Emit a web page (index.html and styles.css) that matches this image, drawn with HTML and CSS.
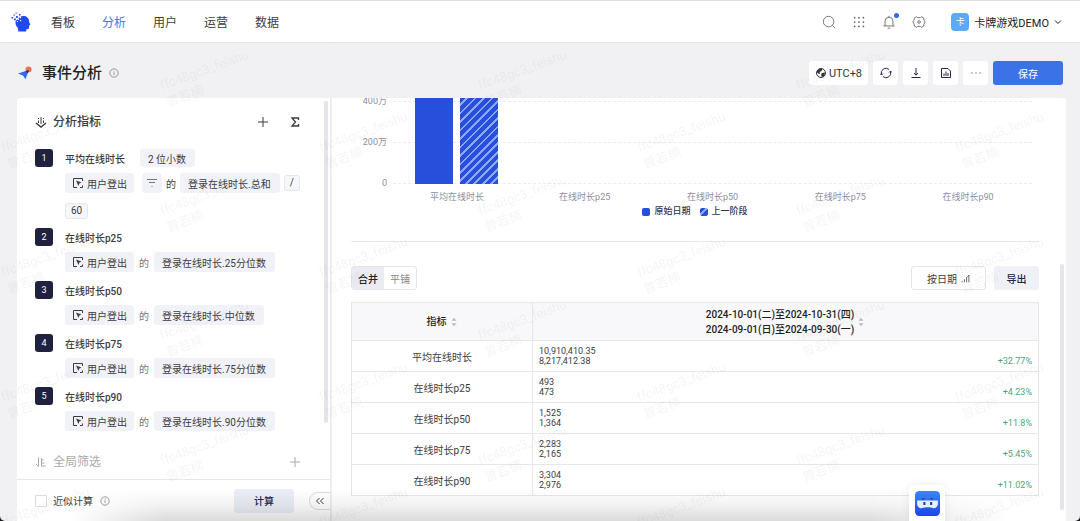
FILE: index.html
```html
<!DOCTYPE html>
<html lang="zh-CN">

<head>
    <meta charset="UTF-8">
    <meta name="viewport" content="width=device-width, initial-scale=1.0">
    <title>事件分析</title>
    <link rel="stylesheet" href="styles.css">
</head>

<body>
    <!-- shared icons -->
    <svg class="sprite" width="0" height="0">
        <symbol id="i-event" viewBox="0 0 12 12">
            <path d="M10.5 4V1.5h-9v9H5M10.5 10.5V8.500M8 10.500h2.500" fill="none" stroke="currentColor" />
            <path d="M4 3.500l5.500 2-2.200 1L6.500 9z" fill="currentColor" />
        </symbol>
        <symbol id="i-info" viewBox="0 0 12 12">
            <circle cx="6" cy="6" r="5" fill="none" stroke="currentColor" />
            <path d="M6 5.200v3.300M6 3.200v1" stroke="currentColor" />
        </symbol>
        <symbol id="i-plus" viewBox="0 0 12 12">
            <path d="M6 1v10M1 6h10" stroke="currentColor" fill="none" />
        </symbol>
        <symbol id="i-sort" viewBox="0 0 8 12">
            <path d="M4 1l3 3.500H1zM4 11l3-3.500H1z" fill="currentColor" />
        </symbol>
    </svg>

    <div class="app">
        <header class="topbar">
            <svg class="logo" viewBox="0 0 20 20">
                <path d="M6 8C8 4.500 12 3.200 15 4.500c2.500 1.300 3.300 3.500 3.200 5.500l1.200 3-1.300.5-.2 2.800c-.2.800-1 .9-2.400.8l-.3 2.400H7.300l-.4-3.500C4.800 14 4.200 11.500 4.600 9z" fill="#1f49f5" />
                <g fill="#1f49f5">
                    <rect x="0.500" y="5" width="1.500" height="1.500" />
                    <rect x="2.500" y="2.500" width="1.200" height="1.200" />
                    <rect x="3" y="6.500" width="1.800" height="1.800" />
                    <rect x="5" y="4" width="1.800" height="1.800" />
                    <rect x="4.500" y="0.500" width="1.200" height="1.200" />
                    <rect x="8" y="2" width="1.500" height="1.500" />
                </g>
                <g fill="#fff">
                    <rect x="6.500" y="6.500" width="1.500" height="1.500" />
                    <rect x="8.800" y="5" width="1.300" height="1.300" />
                    <rect x="6" y="9" width="1" height="1" />
                    <rect x="9" y="8" width="1.200" height="1.200" />
                </g>
            </svg>
            <nav class="nav">
                <a href="#">看板</a>
                <a href="#" class="active">分析</a>
                <a href="#">用户</a>
                <a href="#">运营</a>
                <a href="#">数据</a>
            </nav>
            <div class="tools">
                <button class="icon-btn" aria-label="搜索">
                    <svg viewBox="0 0 16 16"><circle cx="7.500" cy="7.500" r="6" /><path d="M12 12l3 3" /></svg>
                </button>
                <button class="icon-btn" aria-label="应用">
                    <svg viewBox="0 0 16 16" class="dots">
                        <path d="M3 3h.01M8 3h.01M13 3h.01M3 8h.01M8 8h.01M13 8h.01M3 13h.01M8 13h.01M13 13h.01" />
                    </svg>
                </button>
                <button class="icon-btn bell" aria-label="通知">
                    <svg viewBox="0 0 16 16"><path d="M1.500 12.500h13M3.500 12.500V7a4.500 4.500 0 0 1 9 0v5.500M8 2.500V1M6.500 15h3" /></svg>
                    <i class="dot"></i>
                </button>
                <button class="icon-btn" aria-label="设置">
                    <svg viewBox="0 0 16 16"><path d="M5 2l1.500 1h3L11 2l2.500 1.500v2L15 8l-1.500 2.500v2L11 14l-1.500-1h-3L5 14l-2.500-1.500v-2L1 8l1.500-2.500v-2z" /><circle cx="8" cy="8" r="1.500" /></svg>
                </button>
                <button class="project">
                    <span class="avatar">卡</span>
                    <span>卡牌游戏DEMO</span>
                    <svg viewBox="0 0 8 8"><path d="M1 2.500l3 3 3-3" /></svg>
                </button>
            </div>
        </header>

        <div class="page-head">
            <svg class="plane" viewBox="0 0 16 16">
                <circle cx="12" cy="4" r="3.500" fill="#f2704a" />
                <path d="M0 8.500l12.500-4L8.500 15l-2.500-4z" fill="#2f6bea" />
                <path d="M12.500 4.500L8.500 6l2.500 2.200z" fill="#26305e" />
            </svg>
            <h1>事件分析</h1>
            <svg class="info"><use href="#i-info" /></svg>
            <div class="actions">
                <button class="utc">
                    <svg viewBox="0 0 12 12"><circle cx="6" cy="6" r="4.500" fill="none" stroke="currentColor" /><path d="M2 4l3-2.500L7.500 2 6.500 4 4.500 5 5 6.500 4 7 2 5.500zM7 6l3-.5-.5 3L7 10 6 8z" fill="currentColor" /></svg>
                    UTC+8
                </button>
                <button aria-label="刷新">
                    <svg viewBox="0 0 12 12"><path d="M1.500 7.500A4.700 4.700 0 0 1 9 2.400M10.500 4.500A4.700 4.700 0 0 1 3 9.600" /><path d="M0 6.500l1.500 1.500L3 6.500M12 5.500L10.500 4 9 5.500" /></svg>
                </button>
                <button aria-label="下载">
                    <svg viewBox="0 0 12 12"><path d="M6 1v7M4 6l2 2.200L8 6M1.500 10.500h9" /></svg>
                </button>
                <button aria-label="报表">
                    <svg viewBox="0 0 12 12"><path d="M1.500 1.500h6.500l2.500 2.500v6.500h-9zM4 9V6.500M6 9V4.500M8 9V6" /></svg>
                </button>
                <button aria-label="更多">
                    <svg viewBox="0 0 12 12"><path d="M1.500 6h1M5.500 6h1M9.500 6h1" /></svg>
                </button>
                <button class="save">保存</button>
            </div>
        </div>

        <div class="workspace">
            <aside class="panel">
                <div class="panel-body">
                    <div class="section-title">
                        <svg viewBox="0 0 12 12"><path d="M1 7l5 4 5-4" stroke-width="1.500" /><path d="M6 1v7M3.500 2v1M3.500 4.500v2.500M8.500 2v1M8.500 4.500v2.500" /></svg>
                        <h2>分析指标</h2>
                        <button aria-label="添加指标"><svg><use href="#i-plus" /></svg></button>
                        <button aria-label="添加公式"><svg viewBox="0 0 12 12"><path d="M9.500 4V2H3l3.500 4L3 10h6.500V8" stroke-width="1.300" /></svg></button>
                    </div>

                    <ol class="metrics">
                        <li>
                            <span class="num">1</span>
                            <div class="name">平均在线时长 <button class="chip small">2 位小数</button></div>
                            <div class="formula first">
                                <button class="chip event"><svg><use href="#i-event" /></svg>用户登出</button>
                                <button class="chip filter" aria-label="筛选"><svg viewBox="0 0 12 12"><path d="M1 2.500h10M3 5.500h6M5.500 9.500h1" /></svg></button>
                                <span class="of">的</span>
                                <button class="chip">登录在线时长.总和</button>
                                <button class="token">/</button>
                                <button class="token">60</button>
                            </div>
                        </li>
                        <li>
                            <span class="num">2</span>
                            <div class="name">在线时长p25</div>
                            <div class="formula">
                                <button class="chip event"><svg><use href="#i-event" /></svg>用户登出</button>
                                <span class="of">的</span>
                                <button class="chip">登录在线时长.25分位数</button>
                            </div>
                        </li>
                        <li>
                            <span class="num">3</span>
                            <div class="name">在线时长p50</div>
                            <div class="formula">
                                <button class="chip event"><svg><use href="#i-event" /></svg>用户登出</button>
                                <span class="of">的</span>
                                <button class="chip">登录在线时长.中位数</button>
                            </div>
                        </li>
                        <li>
                            <span class="num">4</span>
                            <div class="name">在线时长p75</div>
                            <div class="formula">
                                <button class="chip event"><svg><use href="#i-event" /></svg>用户登出</button>
                                <span class="of">的</span>
                                <button class="chip">登录在线时长.75分位数</button>
                            </div>
                        </li>
                        <li>
                            <span class="num">5</span>
                            <div class="name">在线时长p90</div>
                            <div class="formula">
                                <button class="chip event"><svg><use href="#i-event" /></svg>用户登出</button>
                                <span class="of">的</span>
                                <button class="chip">登录在线时长.90分位数</button>
                            </div>
                        </li>
                    </ol>

                    <div class="section-title muted">
                        <svg viewBox="0 0 12 12"><path d="M3.500 1.500v9L1 8M6.500 2v8.500M6.500 4h2M6.500 7h3M6.500 10h4" /></svg>
                        <h2>全局筛选</h2>
                        <button aria-label="添加筛选"><svg><use href="#i-plus" /></svg></button>
                    </div>
                    <i class="scrollbar"></i>
                </div>
                <footer class="panel-foot">
                    <label><input type="checkbox">近似计算</label>
                    <svg class="info"><use href="#i-info" /></svg>
                    <button class="calc">计算</button>
                    <button class="collapse" aria-label="收起">
                        <svg viewBox="0 0 12 12"><path d="M5.500 3L2.500 6l3 3M9.500 3l-3 3 3 3" /></svg>
                    </button>
                </footer>
            </aside>

            <main class="report">
                <div class="chart">
                    <div class="tick">400万</div>
                    <div class="tick">200万</div>
                    <div class="tick">0</div>
                    <div class="lines"><i></i><i></i><i></i></div>
                    <div class="bars">
                        <div><i class="bar"></i><i class="bar striped"></i></div>
                    </div>
                    <div class="labels">
                        <span>平均在线时长</span>
                        <span>在线时长p25</span>
                        <span>在线时长p50</span>
                        <span>在线时长p75</span>
                        <span>在线时长p90</span>
                    </div>
                </div>
                <div class="legend">
                    <span><i></i>原始日期</span>
                    <span><i class="striped"></i>上一阶段</span>
                </div>

                <div class="table-tools">
                    <div class="switch">
                        <button class="on">合并</button><button>平铺</button>
                    </div>
                    <button class="by-date">按日期
                        <svg viewBox="0 0 12 12"><path d="M1.500 11V9M4.500 11V7M7.500 11V4M10.500 11V1.500L8.500 4" /></svg>
                    </button>
                    <button class="export">导出</button>
                </div>

                <table>
                    <thead>
                        <tr>
                            <th class="metric">指标<svg class="sort"><use href="#i-sort" /></svg></th>
                            <th colspan="2">
                                <div class="range">
                                    <span>2024-10-01(二)至2024-10-31(四)<br>2024-09-01(日)至2024-09-30(一)</span>
                                    <svg class="sort"><use href="#i-sort" /></svg>
                                </div>
                            </th>
                        </tr>
                    </thead>
                    <tbody>
                        <tr>
                            <td class="metric">平均在线时长</td>
                            <td class="value">10,910,410.35<br>8,217,412.38</td>
                            <td class="change">+32.77%</td>
                        </tr>
                        <tr>
                            <td class="metric">在线时长p25</td>
                            <td class="value">493<br>473</td>
                            <td class="change">+4.23%</td>
                        </tr>
                        <tr>
                            <td class="metric">在线时长p50</td>
                            <td class="value">1,525<br>1,364</td>
                            <td class="change">+11.8%</td>
                        </tr>
                        <tr>
                            <td class="metric">在线时长p75</td>
                            <td class="value">2,283<br>2,165</td>
                            <td class="change">+5.45%</td>
                        </tr>
                        <tr>
                            <td class="metric">在线时长p90</td>
                            <td class="value">3,304<br>2,976</td>
                            <td class="change">+11.02%</td>
                        </tr>
                    </tbody>
                </table>
                <i class="scrollbar"></i>
            </main>
        </div>

        <div class="fade"></div>

        <button class="bot" aria-label="助手">
            <svg viewBox="0 0 24 24">
                <defs>
                    <linearGradient id="botBg" x1="0" y1="0" x2="0" y2="1">
                        <stop offset="0" stop-color="#3b86f7" />
                        <stop offset="1" stop-color="#1b46ea" />
                    </linearGradient>
                </defs>
                <rect width="24" height="24" rx="4" fill="url(#botBg)" />
                <path d="M2 9h20v3c0 3-2 4.500-4 4.500-2 0-2.500-.8-6-.8s-4 .8-6 .8c-2 0-4-1.500-4-4.500z" fill="#e6effd" />
                <path d="M7 8l2-.8M15 7.200l2 .8" stroke="#15307e" />
                <path d="M9 10.500v3M15.500 10.500v3" stroke="#24428f" stroke-width="2" />
            </svg>
        </button>

        <svg class="watermark" aria-hidden="true">
            <defs>
                <pattern id="wm" y="11" width="318" height="125" patternUnits="userSpaceOnUse">
                    <g transform="translate(162 36) rotate(-20)">
                        <text>ffc48gc3_feishu</text>
                        <text y="18">曾若楠</text>
                    </g>
                    <g transform="translate(3 98) rotate(-20)">
                        <text>ffc48gc3_feishu</text>
                        <text y="18">曾若楠</text>
                    </g>
                </pattern>
            </defs>
            <rect width="100%" height="100%" fill="url(#wm)" />
        </svg>
    </div>
</body>

</html>
```

FILE: styles.css
```css
* {
    box-sizing: border-box;
}

body {
    margin: 0;
    background: #1a1a1a;
    font-family: Roboto, "Noto Sans CJK SC", sans-serif;
    font-size: 10px;
    color: #3c3c40;
}

button {
    font: inherit;
    color: inherit;
    border: none;
    background: none;
    padding: 0;
    cursor: pointer;
}

svg {
    width: 12px;
    height: 12px;
    flex: none;
    fill: none;
    stroke: currentColor;
}

svg use {
    stroke: none;
}

h1,
h2 {
    margin: 0;
    font-weight: 500;
}

.sprite {
    position: absolute;
    width: 0;
    height: 0;
}

.app {
    position: relative;
    display: flex;
    flex-direction: column;
    height: 100vh;
    overflow: hidden;
    background: #f1f1f4;
    border-radius: 0 0 5px 5px;
}

/* top bar */
.topbar {
    display: flex;
    align-items: center;
    height: 43px;
    flex: none;
    padding: 0 18px 0 11px;
    background: #fff;
    border-top: 1px solid #dedee0;
    border-bottom: 1px solid #e4e4e6;
}

.logo {
    width: 20px;
    height: 22px;
    stroke: none;
}

.nav {
    display: flex;
    gap: 27px;
    margin-left: 20px;
    font-size: 12px;
}

.nav a {
    color: #3c3c40;
    text-decoration: none;
}

.nav a.active {
    color: #3b78ea;
}

.tools {
    display: flex;
    align-items: center;
    gap: 16px;
    margin-left: auto;
    color: #666;
}

.icon-btn {
    display: flex;
    position: relative;
}

.icon-btn svg {
    width: 14px;
    height: 14px;
}

.icon-btn .dots {
    stroke-width: 2;
    stroke-linecap: round;
}

.bell .dot {
    position: absolute;
    top: -2px;
    right: -3px;
    width: 5px;
    height: 5px;
    border-radius: 50%;
    background: #2f6bea;
}

.project {
    display: flex;
    align-items: center;
    gap: 5px;
    margin-left: 9px;
    font-size: 11px;
    color: #222;
}

.project svg {
    width: 8px;
    height: 8px;
}

.avatar {
    width: 18px;
    height: 18px;
    border-radius: 4px;
    background: #5da9f8;
    color: #fff;
    font-size: 9px;
    line-height: 18px;
}

/* page heading */
.page-head {
    display: flex;
    align-items: center;
    height: 55px;
    flex: none;
    padding: 5px 17px 0 18px;
}

.plane {
    width: 14px;
    height: 14px;
    margin-right: 10px;
    stroke: none;
}

.page-head h1 {
    font-size: 15px;
    line-height: 24px;
    color: #222;
}

.info {
    width: 10px;
    height: 10px;
    margin-left: 7px;
    color: #888;
}

.actions {
    display: flex;
    gap: 5px;
    margin-left: auto;
}

.actions button {
    display: flex;
    align-items: center;
    justify-content: center;
    gap: 2px;
    width: 25px;
    height: 24px;
    border-radius: 3px;
    background: #fff;
    color: #26264a;
}

.actions .utc {
    width: 59px;
    font-size: 11px;
    color: #333;
}

.actions .utc svg {
    stroke: none;
}

.actions .save {
    width: 70px;
    background: #3b72e8;
    color: #fff;
}

.workspace {
    display: flex;
    flex: 1;
    min-height: 0;
    margin: 0 14px 0 17px;
    gap: 1px;
}

/* left panel */
.panel {
    position: relative;
    display: flex;
    flex-direction: column;
    width: 314px;
    flex: none;
    background: #fff;
    border-right: 1px solid #ececef;
    border-radius: 3px 0 0 0;
}

.panel-body {
    flex: 1;
    min-height: 0;
    padding: 14px 29px 0 18px;
}

.section-title {
    display: flex;
    align-items: center;
    gap: 6px;
    height: 20px;
}

.section-title h2 {
    flex: 1;
    font-size: 12px;
    line-height: 18px;
}

.section-title button {
    display: flex;
    margin-left: 14px;
}

.section-title.muted {
    color: #aaa;
}

.section-title.muted h2 {
    font-weight: 400;
}

.metrics {
    margin: 17px 0 21px;
    padding: 0;
    list-style: none;
}

.metrics li {
    display: grid;
    grid-template-columns: 18px 1fr;
    column-gap: 12px;
    row-gap: 6px;
    margin-bottom: 9px;
}

.num {
    width: 18px;
    height: 18px;
    border-radius: 3px;
    background: #20203f;
    color: #fff;
    font-size: 9px;
    line-height: 18px;
    text-align: center;
}

.name {
    display: flex;
    align-items: center;
    gap: 15px;
    height: 18px;
    font-weight: 500;
}

.formula {
    grid-column: 2;
    display: flex;
    flex-wrap: wrap;
    align-items: center;
    gap: 5px;
    margin-right: -10px;
}

.formula.first {
    gap: 10px 4px;
}

.chip {
    display: flex;
    align-items: center;
    gap: 3px;
    height: 20px;
    padding: 0 9px 0 8px;
    border-radius: 3px;
    background: #f1f2f8;
    white-space: nowrap;
}

.chip.small {
    height: 18px;
    font-weight: 400;
}

.chip.event {
    padding: 0 7px;
}

.chip.filter {
    padding: 0 4px;
    margin-left: 4px;
    color: #777;
}

.of {
    color: #777;
}

.first .of {
    color: inherit;
}

.token {
    height: 16px;
    min-width: 16px;
    padding: 0 5px;
    border: 1px solid #e6e7ee;
    border-radius: 3px;
    background: #f6f7fa;
    line-height: 14px;
}

.panel-foot {
    display: flex;
    align-items: center;
    height: 42px;
    flex: none;
    padding-left: 18px;
    border-top: 1px solid #e8e8ea;
}

.panel-foot label {
    display: flex;
    align-items: center;
    gap: 6px;
}

.panel-foot input {
    appearance: none;
    width: 12px;
    height: 12px;
    margin: 0;
    border: 1px solid #dcdcdf;
    border-radius: 1px;
}

.calc {
    width: 60px;
    height: 24px;
    margin-left: auto;
    border-radius: 3px;
    background: #eceef6;
    color: #26264a;
    font-weight: 500;
}

.collapse {
    display: flex;
    align-items: center;
    justify-content: center;
    width: 21px;
    height: 18px;
    margin-left: 15px;
    border: 1px solid #dcdcdf;
    border-right: none;
    border-radius: 9px 0 0 9px;
    background: #fff;
}

.scrollbar {
    position: absolute;
    width: 4px;
    border-radius: 2px;
    background: #e4e5eb;
}

.panel .scrollbar {
    top: 3px;
    right: 2px;
    bottom: 98px;
}

.report .scrollbar {
    top: 166px;
    right: 2px;
    bottom: 11px;
}

/* chart */
.report {
    position: relative;
    flex: 1;
    min-width: 0;
    overflow: hidden;
    padding: 0 27px 0 19px;
    background: #fff;
    border-radius: 0 3px 0 0;
}

.chart {
    display: grid;
    grid-template-columns: 36px 1fr;
    grid-template-rows: repeat(3, 41px) auto;
    column-gap: 6px;
    margin: -17px 7px 0 0;
    font-size: 9px;
    color: #8a8fa3;
}

.tick {
    grid-column: 1;
    line-height: 41px;
    text-align: right;
}

.lines,
.bars {
    grid-area: 1 / 2 / 4 / 3;
    padding-bottom: 20px;
}

.lines {
    display: flex;
    flex-direction: column;
    justify-content: flex-end;
}

.lines i {
    height: 41px;
    flex: none;
    border-bottom: 1px dashed #ececf2;
}

.lines i:first-child {
    height: 21px;
}

.bars div {
    display: flex;
    justify-content: center;
    gap: 7px;
    width: 20%;
    height: 100%;
}

.bar {
    width: 38px;
    background: #264fdb;
}

.striped {
    background: repeating-linear-gradient(135deg, #264fdb 0 4px, #8fa6f0 4px 6px);
}

.labels {
    grid-column: 2;
    display: flex;
    margin-top: -14px;
    line-height: 14px;
}

.labels span {
    flex: 1;
    text-align: center;
}

.legend {
    display: flex;
    justify-content: center;
    gap: 9px;
    height: 38px;
    border-bottom: 1px solid #e8e8ea;
    font-size: 9px;
    font-weight: 500;
    line-height: 14px;
    color: #33375a;
}

.legend span {
    display: flex;
    align-items: flex-start;
    gap: 4px;
}

.legend i {
    width: 8px;
    height: 8px;
    margin-top: 4px;
    border-radius: 2px;
    background-color: #264fdb;
}

/* table */
.table-tools {
    display: flex;
    align-items: center;
    gap: 8px;
    margin: 24px 0 12px;
}

.switch {
    display: flex;
    margin-right: auto;
    border: 1px solid #e4e5ea;
    border-radius: 3px;
}

.switch button {
    width: 32px;
    height: 22px;
    color: #888;
}

.switch .on {
    background: #ebecf2;
    color: #222;
    font-weight: 500;
}

.by-date {
    display: flex;
    align-items: center;
    justify-content: center;
    gap: 4px;
    width: 75px;
    height: 24px;
    border: 1px solid #e4e5ea;
    border-radius: 3px;
}

.by-date svg {
    width: 9px;
    height: 9px;
}

.export {
    width: 45px;
    height: 24px;
    border-radius: 3px;
    background: #f0f1f7;
    color: #26264a;
    font-weight: 500;
}

table {
    width: 100%;
    border-collapse: collapse;
    border: 1px solid #e6e7ea;
}

th {
    height: 38px;
    padding: 0;
    border: 1px solid #e6e7ea;
    background: #f8f8fa;
    color: #222;
    font-weight: 500;
    line-height: 15px;
}

td {
    height: 31px;
    padding: 0 6px;
    border-bottom: 1px solid #e6e7ea;
}

.metric {
    width: 181px;
    border-right: 1px solid #e6e7ea;
    text-align: center;
}

.sort {
    width: 8px;
    height: 10px;
    margin-left: 3px;
    color: #bbb;
    vertical-align: middle;
}

.range {
    display: flex;
    align-items: center;
    justify-content: center;
}

td.value {
    font-size: 9px;
    line-height: 10px;
}

.change {
    padding-bottom: 4px;
    vertical-align: bottom;
    text-align: right;
    font-size: 9px;
    line-height: 11px;
    color: #4ba67c;
}

/* overlays */
.fade {
    position: absolute;
    left: 70px;
    right: 70px;
    bottom: 0;
    height: 32px;
    background: linear-gradient(to top, rgba(0, 0, 0, 0.14), rgba(0, 0, 0, 0.05) 50%, rgba(0, 0, 0, 0));
    mask-image: linear-gradient(to right, transparent, #000 10%, #000 85%, transparent);
    pointer-events: none;
}

.bot {
    position: absolute;
    right: 135px;
    bottom: 0;
    width: 36px;
    height: 36px;
    border-radius: 5px 5px 0 0;
    background: #fff;
    box-shadow: 0 0 10px rgba(0, 0, 0, 0.08);
}

.bot svg {
    display: block;
    width: 25px;
    height: 25px;
    margin: 0 auto;
    stroke: none;
}

.watermark {
    position: absolute;
    left: 0;
    top: 43px;
    width: 100%;
    height: 100%;
    pointer-events: none;
    stroke: none;
}

.watermark text {
    font-size: 13px;
    fill: rgba(60, 60, 80, 0.05);
}
```
